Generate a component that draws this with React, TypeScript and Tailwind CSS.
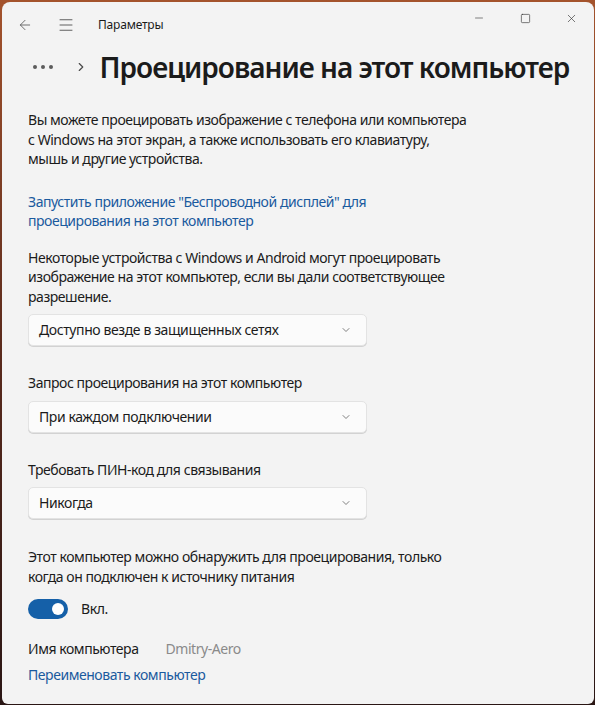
import { ChevronDown, ChevronRight, ArrowLeft, Menu, Minus, Square, X } from "lucide-react";

const font = { fontFamily: '"Segoe UI", "Noto Sans", "Open Sans", sans-serif' };

function Select({ value }: { value: string }) {
  return (
    <div className="flex h-[32px] w-[339px] items-center justify-between rounded-[5px] border border-[#e3e3e3] bg-[#fbfbfb] pl-[10px] pr-[14px] shadow-[0_1px_0_#d2d2d2]">
      <span className="text-[14px] tracking-[-0.4px] text-[#1b1b1b]">{value}</span>
      <ChevronDown className="size-[12px] text-[#5f5f5f]" strokeWidth={1.6} />
    </div>
  );
}

export default function App() {
  return (
    <div
      className="h-[705px] w-[595px] overflow-hidden bg-gradient-to-b from-[#a4532c] via-[#5a2a1c] to-[#2a1614] pl-[2px] pr-[1px] pt-[2px] pb-[1px]"
      style={font}
    >
      <div className="flex h-full flex-col rounded-t-[8px] rounded-b-[6px] bg-[#f3f3f3] text-[#1b1b1b]">
        {/* title bar */}
        <div className="flex items-start justify-between">
          <div className="flex h-[46px] items-center pl-[15px]">
            <ArrowLeft className="size-[16px] text-[#5c5c5c]" strokeWidth={1.3} />
            <Menu className="ml-[24px] size-[18px] text-[#5c5c5c]" strokeWidth={1.3} />
            <span className="ml-[23px] text-[12px] tracking-[-0.2px] text-[#1b1b1b]">Параметры</span>
          </div>
          <div className="flex h-[32px] items-center text-[#333]">
            <div className="flex w-[46px] justify-center">
              <Minus className="size-[12px]" strokeWidth={1.2} />
            </div>
            <div className="flex w-[46px] justify-center">
              <Square className="size-[11px]" strokeWidth={1.4} />
            </div>
            <div className="flex w-[46px] justify-center">
              <X className="size-[13px]" strokeWidth={1.2} />
            </div>
          </div>
        </div>

        {/* breadcrumb */}
        <div className="flex h-[38px] items-center pl-[31px]">
          <span className="flex gap-[4.5px]">
            <span className="size-[3.5px] rounded-full bg-[#5c5c5c]" />
            <span className="size-[3.5px] rounded-full bg-[#5c5c5c]" />
            <span className="size-[3.5px] rounded-full bg-[#5c5c5c]" />
          </span>
          <ChevronRight className="ml-[21px] size-[14px] text-[#4a4a4a]" strokeWidth={2} />
          <h1 className="ml-[12px] whitespace-nowrap text-[28px] font-semibold leading-none tracking-[-1px] text-[#1b1b1b]">
            Проецирование на этот компьютер
          </h1>
        </div>

        <div className="flex flex-col pl-[26px] pt-[24px] text-[14px] leading-[19.5px] tracking-[-0.45px]">
          <p className="w-[441px]">
            Вы можете проецировать изображение с телефона или компьютера с Windows на этот экран, а также использовать его клавиатуру, мышь и другие устройства.
          </p>
          <a className="mt-[23px] w-[360px] text-[#1a5a9e]">
            Запустить приложение "Беспроводной дисплей" для проецирования на этот компьютер
          </a>
          <p className="mt-[17px] w-[430px]">
            Некоторые устройства с Windows и Android могут проецировать изображение на этот компьютер, если вы дали соответствующее разрешение.
          </p>
          <div className="mt-[8px]">
            <Select value="Доступно везде в защищенных сетях" />
          </div>

          <p className="mt-[27px]">Запрос проецирования на этот компьютер</p>
          <div className="mt-[8px]">
            <Select value="При каждом подключении" />
          </div>

          <p className="mt-[27px]">Требовать ПИН-код для связывания</p>
          <div className="mt-[8px]">
            <Select value="Никогда" />
          </div>

          <p className="mt-[28px] w-[430px]">
            Этот компьютер можно обнаружить для проецирования, только когда он подключен к источнику питания
          </p>

          <div className="mt-[13px] flex items-center">
            <div className="flex h-[20px] w-[40px] items-center justify-end rounded-full bg-[#1560a8] pr-[4px]">
              <span className="size-[12px] rounded-full bg-white" />
            </div>
            <span className="ml-[13px]">Вкл.</span>
          </div>

          <div className="mt-[20px] flex">
            <span>Имя компьютера</span>
            <span className="ml-[27px] text-[#8a8a8a]">Dmitry-Aero</span>
          </div>
          <a className="mt-[6px] text-[#1a5a9e]">Переименовать компьютер</a>
        </div>
      </div>
    </div>
  );
}
